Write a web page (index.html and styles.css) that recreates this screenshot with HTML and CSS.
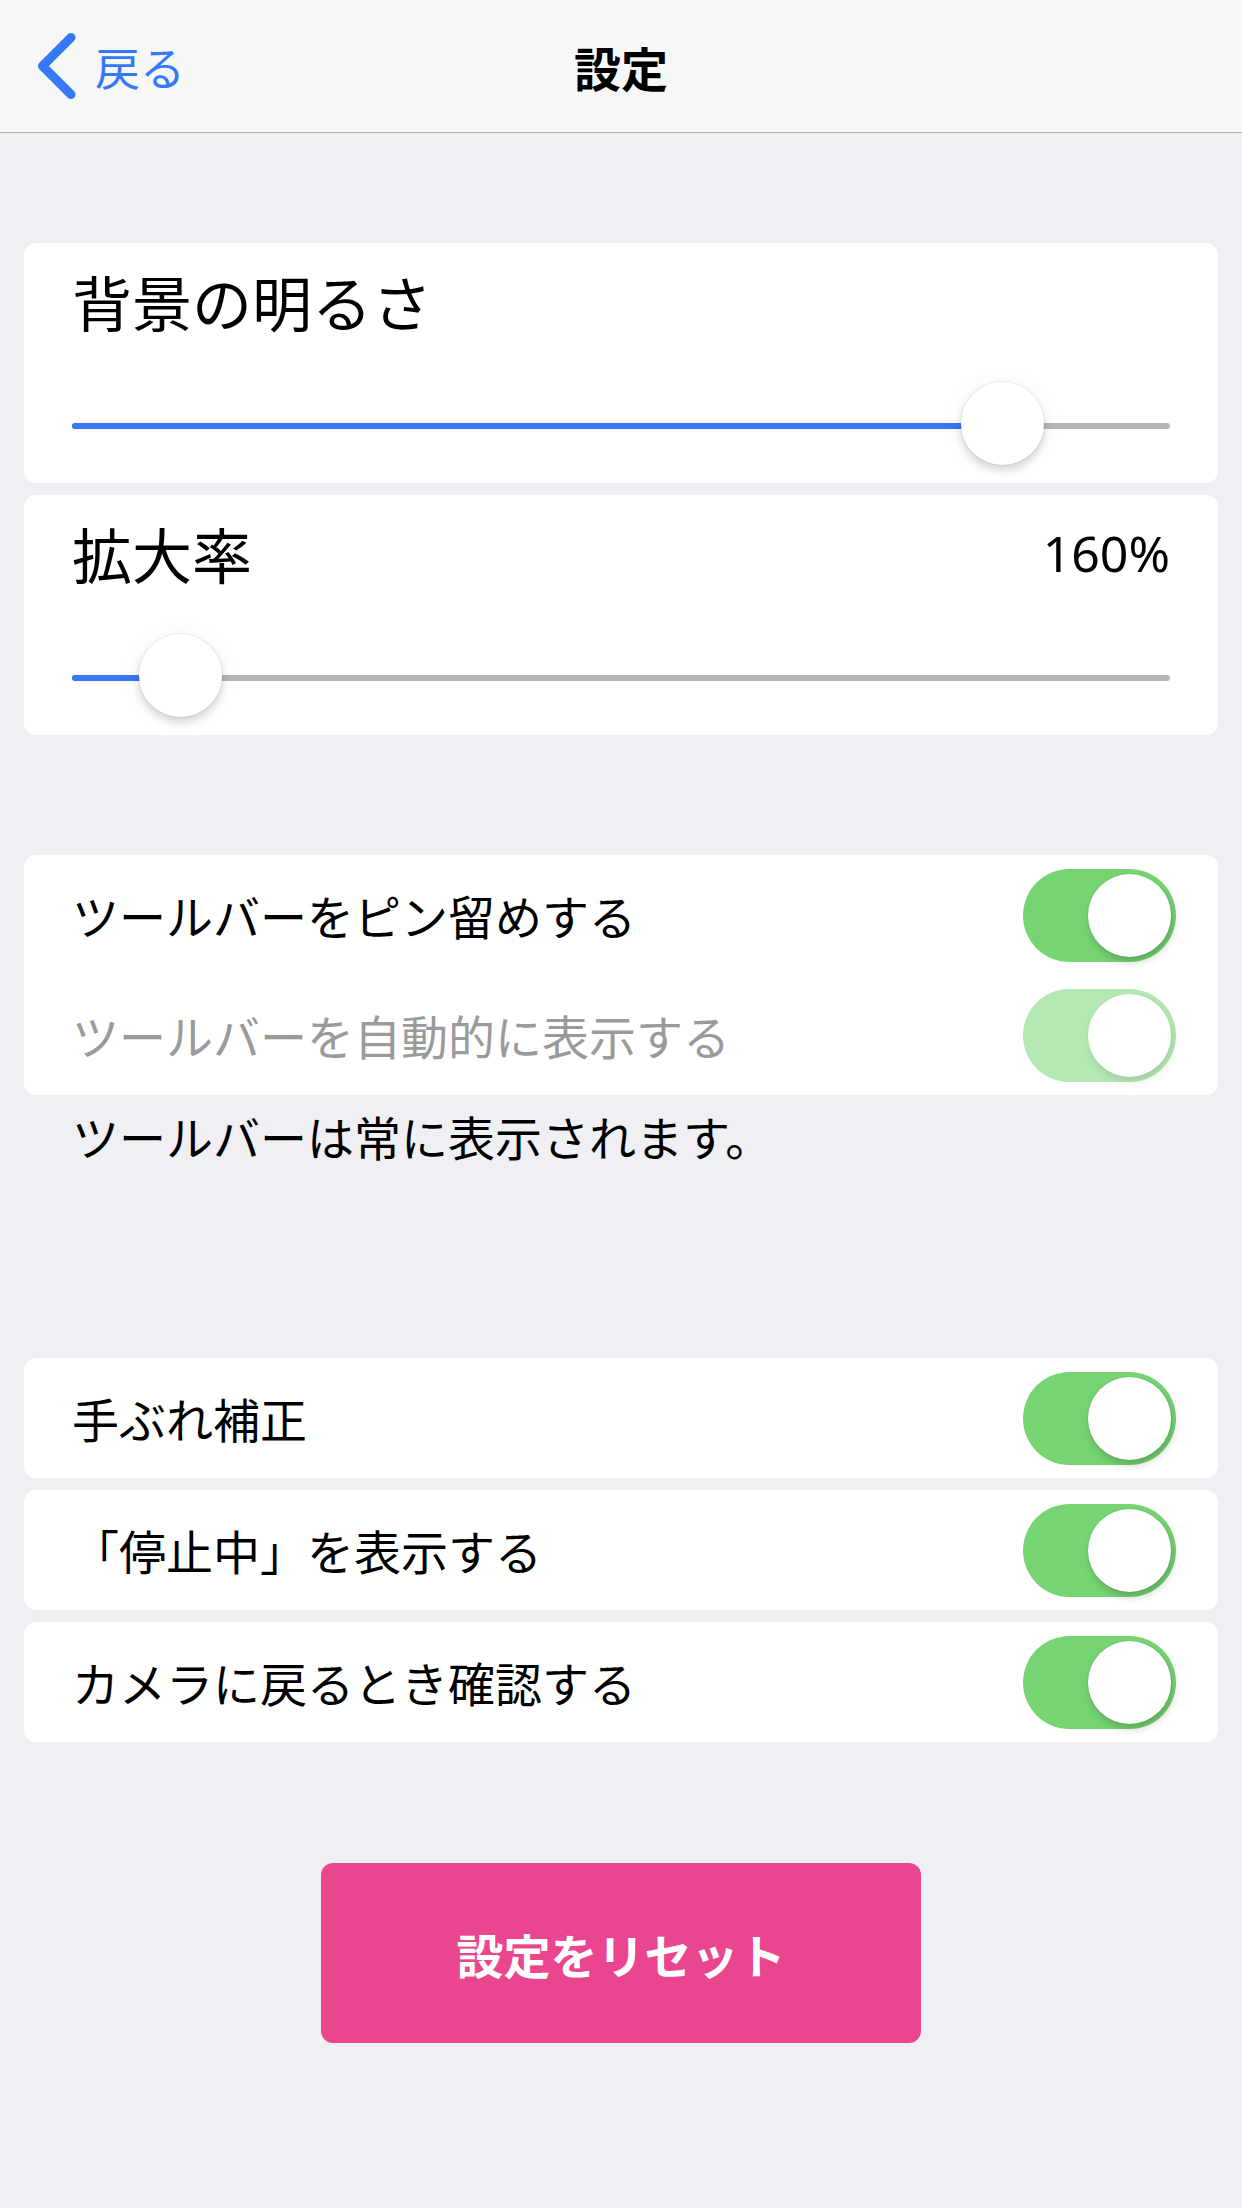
FILE: index.html
```html
<!DOCTYPE html>
<html lang="ja">
<head>
    <meta charset="UTF-8">
    <meta name="viewport" content="width=device-width, initial-scale=1.0">
    <title>設定</title>
    <link rel="stylesheet" href="styles.css">
</head>
<body>

<!-- Navigation bar -->
<header class="nav">
    <a class="back" href="#">
        <svg class="chevron" width="40" height="66" viewBox="0 0 40 66">
            <path d="M33 4.5 L4.5 33 L33 61.5" />
        </svg>
        <span>戻る</span>
    </a>
    <h1 class="title">設定</h1>
    <div></div>
</header>

<main class="content">

    <!-- Sliders -->
    <section class="card slider-card">
        <div class="label-row">
            <span class="label">背景の明るさ</span>
        </div>
        <div class="slider">
            <div class="track"><div class="fill" style="width: 84.7%"></div></div>
            <div class="thumb" style="left: calc(84.7% - 41.5px)"></div>
        </div>
    </section>

    <section class="card slider-card">
        <div class="label-row">
            <span class="label">拡大率</span>
            <span class="value">160%</span>
        </div>
        <div class="slider">
            <div class="track"><div class="fill" style="width: 9.9%"></div></div>
            <div class="thumb" style="left: calc(9.9% - 41.5px)"></div>
        </div>
    </section>

    <!-- Toolbar -->
    <section class="card toolbar-card">
        <div class="row">
            <span>ツールバーをピン留めする</span>
            <span class="switch on"><span class="knob"></span></span>
        </div>
        <div class="row disabled">
            <span>ツールバーを自動的に表示する</span>
            <span class="switch on"><span class="knob"></span></span>
        </div>
    </section>
    <p class="note">ツールバーは常に表示されます。</p>

    <!-- Options -->
    <div class="options">
        <section class="card row">
            <span>手ぶれ補正</span>
            <span class="switch on"><span class="knob"></span></span>
        </section>
        <section class="card row">
            <span>「停止中」を表示する</span>
            <span class="switch on"><span class="knob"></span></span>
        </section>
        <section class="card row">
            <span>カメラに戻るとき確認する</span>
            <span class="switch on"><span class="knob"></span></span>
        </section>
    </div>

    <button class="reset">設定をリセット</button>
</main>

</body>
</html>
```

FILE: styles.css
```css
body {
    margin: 0;
    background-color: #efeff4;
    color: #000;
    font-family: "Noto Sans CJK JP", sans-serif;
    font-size: 47px;
}
/* Nav bar */
.nav {
    display: grid;
    grid-template-columns: 1fr auto 1fr;
    align-items: center;
    height: 132px;
    background-color: #f7f7f7;
    border-bottom: 1px solid #b2b2b2;
}
.back {
    display: flex;
    align-items: center;
    gap: 17px;
    padding-left: 38px;
    color: #3579f6;
    text-decoration: none;
    font-size: 45px;
    line-height: 1;
}
.chevron path {
    fill: none;
    stroke: #3579f6;
    stroke-width: 9;
    stroke-linecap: round;
    stroke-linejoin: round;
}
.title {
    margin: 0;
    font-size: 47px;
    font-weight: bold;
    line-height: 1;
}
.content {
    padding: 110px 24px 0;
}
.card {
    background-color: #ffffff;
    border-radius: 12px;
}
/* Slider cards */
.slider-card {
    padding: 28px 48px 15px;
    margin-bottom: 12px;
}
.label-row {
    display: flex;
    justify-content: space-between;
    align-items: center;
    height: 60px;
}
.label {
    font-size: 60px;
    line-height: 60px;
}
.value {
    font-family: "Noto Sans", sans-serif;
    font-size: 50px;
    line-height: 60px;
}
.slider {
    position: relative;
    display: flex;
    align-items: center;
    height: 84px;
    margin-top: 53px;
}
.track {
    width: 100%;
    height: 6px;
    border-radius: 3px;
    background-color: #b6b6b6;
}
.fill {
    height: 100%;
    border-radius: 3px;
    background-color: #3579f6;
}
.thumb {
    position: absolute;
    top: -2px;
    width: 83px;
    height: 83px;
    border-radius: 50%;
    background-color: #fff;
    box-shadow: 0 0 0 1px rgba(0, 0, 0, 0.04), 0 5px 8px rgba(0, 0, 0, 0.16), 0 0 24px rgba(0, 0, 0, 0.05);
}
/* Switch rows */
.toolbar-card {
    margin-top: 120px;
}
.row {
    display: flex;
    justify-content: space-between;
    align-items: center;
    height: 120px;
    padding: 0 42px 0 48px;
    line-height: 1.2;
}
.switch {
    position: relative;
    width: 153px;
    height: 93px;
    border-radius: 47px;
    background-color: #e5e5ea;
}
.switch.on {
    background-color: #76d572;
}
.knob {
    position: absolute;
    top: 5px;
    right: 5px;
    width: 83px;
    height: 83px;
    border-radius: 50%;
    background-color: #fff;
    box-shadow: 0 0 0 1px rgba(0, 0, 0, 0.04), 2px 5px 9px rgba(0, 0, 0, 0.2);
}
.disabled {
    color: #9a9a9a;
}
.disabled .switch.on {
    background-color: #b4e8b2;
}
.disabled .knob {
    box-shadow: 0 0 0 1px rgba(0, 0, 0, 0.02), 2px 5px 9px rgba(0, 0, 0, 0.1);
}
.note {
    margin: 17px 0 0;
    padding-left: 48px;
    font-size: 47px;
    line-height: 47px;
}
.options {
    display: flex;
    flex-direction: column;
    gap: 12px;
    margin-top: 199px;
}
/* Reset button */
.reset {
    display: block;
    width: 600px;
    height: 180px;
    margin: 121px auto 0;
    border: none;
    border-radius: 12px;
    background-color: #ea468f;
    color: #fff;
    font-family: "Noto Sans CJK JP", sans-serif;
    font-size: 47px;
    font-weight: bold;
    cursor: pointer;
}
```
